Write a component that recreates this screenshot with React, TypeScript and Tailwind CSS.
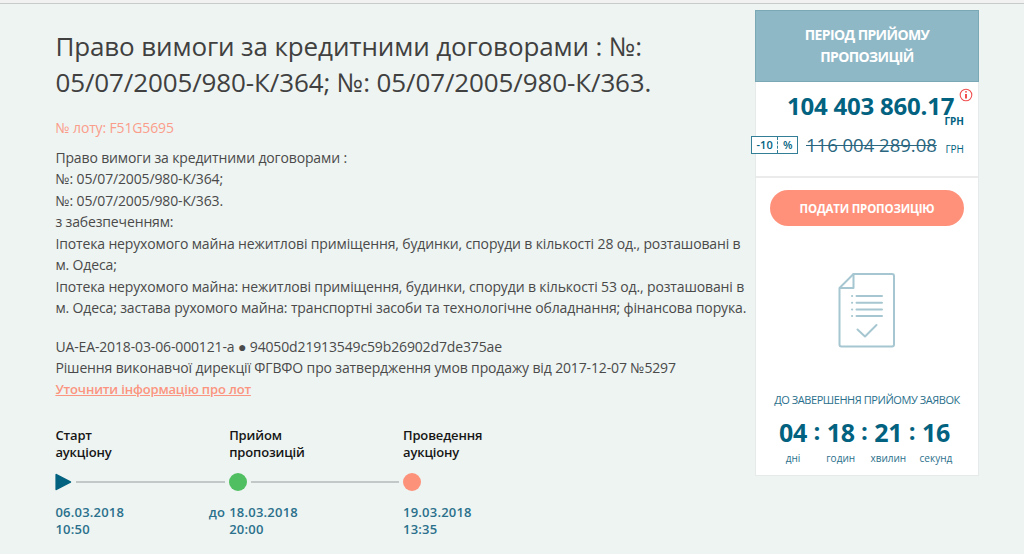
import { Fragment } from "react";
import clsx from "clsx";

type Step = {
  title: [string, string];
  prefix?: string;
  date: string;
  time: string;
  marker: "start" | "active" | "finish";
};

const DESCRIPTION = [
  "Право вимоги за кредитними договорами :",
  "№: 05/07/2005/980-К/364;",
  "№: 05/07/2005/980-К/363.",
  "з забезпеченням:",
  "Іпотека нерухомого майна нежитлові приміщення, будинки, споруди в кількості 28 од., розташовані в",
  "м. Одеса;",
  "Іпотека нерухомого майна: нежитлові приміщення, будинки, споруди в кількості 53 од., розташовані в",
  "м. Одеса; застава рухомого майна: транспортні засоби та технологічне обладнання; фінансова порука.",
];

const STEPS: Step[] = [
  { title: ["Старт", "аукціону"], date: "06.03.2018", time: "10:50", marker: "start" },
  { title: ["Прийом", "пропозицій"], prefix: "до", date: "18.03.2018", time: "20:00", marker: "active" },
  { title: ["Проведення", "аукціону"], date: "19.03.2018", time: "13:35", marker: "finish" },
];

const COUNTDOWN = [
  { value: "04", label: "дні" },
  { value: "18", label: "годин" },
  { value: "21", label: "хвилин" },
  { value: "16", label: "секунд" },
];

function Marker({ kind }: { kind: Step["marker"] }) {
  if (kind === "start") {
    return (
      <svg width="17" height="18" viewBox="0 0 17 18" className="shrink-0">
        <path d="M1.3 1.7 15.3 9 1.3 16.3Z" fill="#02627f" stroke="#02627f" strokeWidth="1.8" strokeLinejoin="round" />
      </svg>
    );
  }
  return (
    <span
      className={clsx(
        "size-[18px] shrink-0 rounded-full",
        kind === "active" ? "bg-[#50bf62]" : "bg-[#fd927b]",
      )}
    />
  );
}

function Timeline() {
  return (
    <div className="mt-[26.6px] flex text-[13px] font-semibold leading-[17px]">
      {STEPS.map((step, i) => (
        <div key={step.date} className="w-[173.8px] shrink-0">
          <div className="whitespace-nowrap tracking-[-0.15px] text-[#161616]">
            {step.title[0]}
            <br />
            {step.title[1]}
          </div>
          <div className="mt-3 flex h-[18px] items-center">
            <Marker kind={step.marker} />
            {i < STEPS.length - 1 && (
              <span className="ml-1 mr-1 h-[2px] flex-1 bg-[#c2c7c7]" />
            )}
          </div>
          <div className="relative mt-[13px] whitespace-nowrap tracking-[0.22px] text-[#2a708c]">
            {step.prefix && <span className="absolute right-full mr-1">{step.prefix}</span>}
            {step.date}
            <br />
            {step.time}
          </div>
        </div>
      ))}
    </div>
  );
}

function DocumentIcon() {
  return (
    <svg
      width="58"
      height="76"
      viewBox="0 0 58 76"
      fill="none"
      stroke="#a6c7d1"
      strokeWidth="2"
      strokeLinecap="round"
      strokeLinejoin="round"
    >
      <path d="M15.5 2H54a2 2 0 0 1 2 2V72.5a2 2 0 0 1-2 2H3.5a2 2 0 0 1-2-2V16Z" />
      <path d="M15.5 2v14H2" />
      <path d="M18.5 24H44M18.5 30.7H44M18.5 37.4H44M18.5 44H44" />
      <path d="M14 24h.2M14 30.7h.2M14 37.4h.2M14 44h.2" />
      <path d="m19.5 57.5 7.5 7L38.5 53" />
    </svg>
  );
}

function BidCard() {
  return (
    <aside className="mt-[6px] h-[466px] w-[224px] shrink-0">
      <div className="flex h-[72px] items-center justify-center border border-[#7ba8b5] bg-[#8fb8c7] text-center text-[14px] font-bold leading-[22px] tracking-[-0.62px] text-white">
        <span>
          ПЕРІОД ПРИЙОМУ
          <br />
          ПРОПОЗИЦІЙ
        </span>
      </div>
      <div className="h-[394px] border border-t-0 border-[#e6eaea] bg-white text-[#02627f]">
        <div className="relative h-[96px] border-b-2 border-[#ebebeb]">
          <div className="absolute left-[31px] top-[8px] whitespace-nowrap text-[24px] font-bold leading-8 tracking-[-0.22px]">
            104 403 860.17
          </div>
          <svg width="14" height="14" viewBox="0 0 14 14" className="absolute right-[5px] top-[6px]">
            <circle cx="7" cy="7" r="5.8" fill="none" stroke="#f05050" strokeWidth="1.1" />
            <path d="M7 6v4.5M7 3.3v1.3" stroke="#f02f2f" strokeWidth="1.7" />
          </svg>
          <span className="absolute right-[14px] top-[33px] text-[10px] font-bold leading-3">ГРН</span>
          <div className="absolute left-[-5px] top-[54px] flex h-[18px] w-[47px] items-center border border-[#327e97] bg-white text-[11px] font-semibold leading-4">
            <span className="flex-[27] text-center">-10</span>
            <span className="h-full border-l border-dashed border-[#327e97]" />
            <span className="flex-[20] text-center">%</span>
          </div>
          <span className="absolute left-[50px] top-[51px] whitespace-nowrap text-[18.5px] leading-6 text-[#2a6680] line-through decoration-1">
            116 004 289.08
          </span>
          <span className="absolute right-[14px] top-[61px] text-[10px] leading-3">ГРН</span>
        </div>
        <div className="flex flex-col items-center">
          <button className="mt-[12px] h-[36px] w-[194px] rounded-full bg-[#ff917b] pt-px text-[11.5px] font-bold tracking-[-0.2px] text-white">
            ПОДАТИ ПРОПОЗИЦІЮ
          </button>
          <div className="mt-[46px]">
            <DocumentIcon />
          </div>
          <div className="mt-[42px] whitespace-nowrap text-[11px] leading-5 tracking-[-0.43px] text-[#2a708c]">
            ДО ЗАВЕРШЕННЯ ПРИЙОМУ ЗАЯВОК
          </div>
          <div className="mr-[5px] mt-[5px] flex">
            {COUNTDOWN.map((part, i) => (
              <Fragment key={part.label}>
                {i > 0 && <span className="w-[7.6px] text-center text-[24px] font-bold leading-[32px]">:</span>}
                <div className="flex w-10 flex-col items-center">
                  <span className="text-[25px] font-bold leading-[34px] tracking-[-0.3px]">{part.value}</span>
                  <span className="mt-[3px] text-[10px] leading-3 text-[#2a708c]">{part.label}</span>
                </div>
              </Fragment>
            ))}
          </div>
        </div>
      </div>
    </aside>
  );
}

export default function App() {
  return (
    <div className="h-[554px] w-[1024px] overflow-hidden bg-[#eef4f2] font-['Open_Sans','Noto_Sans',sans-serif]">
      <div className="h-1 border-b border-[#c8cbcb] bg-[#f1f1f1]" />
      <div className="flex">
        <main className="w-[755px] shrink-0 pl-[55.4px] pt-[24px] text-[#4a4a4a]">
          <h1 className="whitespace-nowrap text-[26px] leading-9 tracking-[-0.12px] text-[#404040]">
            Право вимоги за кредитними договорами : №:
            <br />
            05/07/2005/980-К/364; №: 05/07/2005/980-К/363.
          </h1>
          <div className="mt-[18px] text-[14px] leading-[20px] tracking-[-0.14px] text-[#fb9d8b]">№ лоту: F51G5695</div>
          <div className="mt-[8.6px] whitespace-nowrap text-[14px] leading-[21.5px] tracking-[-0.14px]">
            {DESCRIPTION.map((line) => (
              <div key={line}>{line}</div>
            ))}
          </div>
          <div className="mt-[17px] whitespace-nowrap text-[14px] leading-[21.5px] tracking-[-0.14px]">
            <div>UA-EA-2018-03-06-000121-a ● 94050d21913549c59b26902d7de375ae</div>
            <div>Рішення виконавчої дирекції ФГВФО про затвердження умов продажу від 2017-12-07 №5297</div>
            <div className="text-[13px] font-semibold tracking-[-0.16px] text-[#fb9480]">
              <a className="underline">Уточнити інформацію про лот</a>
            </div>
          </div>
          <Timeline />
        </main>
        <BidCard />
      </div>
    </div>
  );
}
